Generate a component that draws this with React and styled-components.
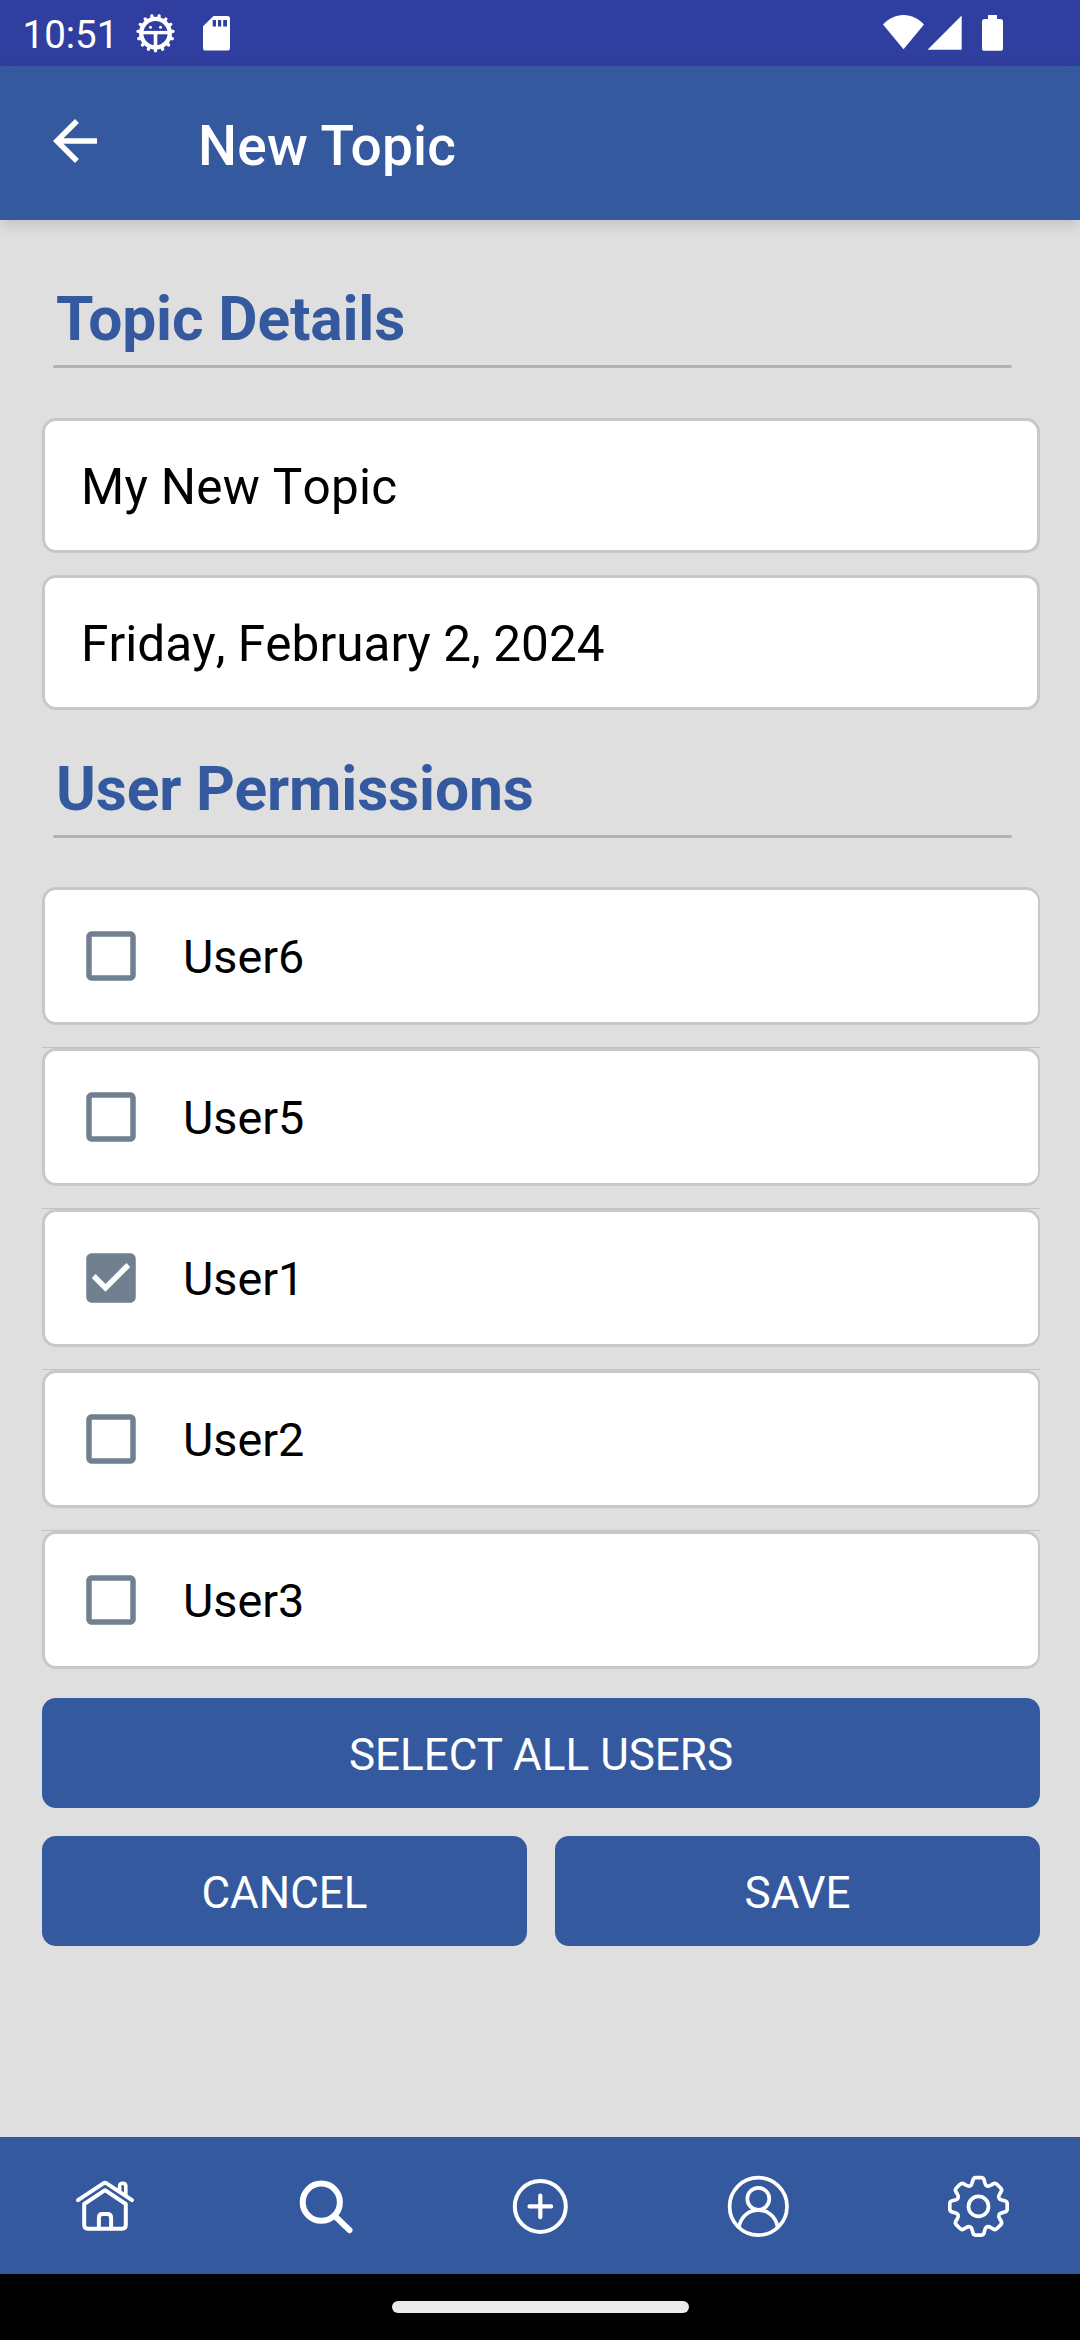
import React, { useState } from 'react';
import styled, { createGlobalStyle } from 'styled-components';

const Global = createGlobalStyle`
  * { box-sizing: border-box; }
  body { margin: 0; background: #dfdfdf; font-family: Roboto, "Noto Sans", sans-serif; }
  button, input { font: inherit; }
`;

const Screen = styled.div`
  width: 1080px;
  height: 2340px;
  display: flex;
  flex-direction: column;
  background: #dfdfdf;
  overflow: hidden;
`;

const StatusBar = styled.div`
  height: 66px;
  flex: none;
  display: flex;
  justify-content: space-between;
  background: #303f9f;
  color: #fff;
`;

const StatusGroup = styled.div`
  display: flex;
  align-items: flex-start;
  padding: 0 ${(p) => p.$right || 0}px 0 ${(p) => p.$left || 0}px;
`;

const Clock = styled.span`
  width: 113px;
  font-size: 38.5px;
  line-height: 69px;
`;

const Glyph = styled.svg`
  display: block;
  flex: none;
  overflow: visible;
`;

const AppBar = styled.header`
  height: 154px;
  flex: none;
  display: flex;
  padding-left: 42px;
  background: #34599f;
  color: #fff;
  box-shadow: 0 5px 14px rgba(0, 0, 0, 0.13);
  z-index: 1;
`;

const BackButton = styled.button`
  width: 66px;
  height: 66px;
  margin-top: 42px;
  padding: 0;
  border: 0;
  background: none;
  color: inherit;
`;

const Title = styled.h1`
  margin: 0 0 0 90px;
  font-size: 55px;
  font-weight: 500;
  letter-spacing: 0.2px;
  line-height: 161px;
`;

const Form = styled.main`
  flex: 1;
  padding: 20px 40px 0 42px;
`;

const Heading = styled.h2`
  width: 959px;
  margin: 0 0 ${(p) => p.$after}px 11px;
  padding: 43.5px 0 0 3px;
  font-size: 60.5px;
  font-weight: 700;
  letter-spacing: -0.15px;
  line-height: 72px;
  color: #34599f;

  &::after {
    content: "";
    display: block;
    height: 3px;
    margin: 9.5px 0 0 -3px;
    border-radius: 2px;
    background: #b2b2b2;
  }
`;

const Fields = styled.div`
  display: grid;
  gap: 22px;
`;

const Field = styled.div`
  height: 135px;
  padding: 3px 0 0 36px;
  border: 3px solid #c8c8c8;
  border-radius: 14px;
  background: #fff;
  color: #000;
  font-size: 49.5px;
  font-kerning: none;
  letter-spacing: ${(p) => p.$tracking}px;
  line-height: 127px;
`;

const UserList = styled.ul`
  margin: 0;
  padding: 0;
  list-style: none;
`;

const UserItem = styled.li`
  & + & {
    margin-top: 22px;
    border-top: 1px solid #c2c2c2;
  }
`;

const UserRow = styled.label`
  height: 138px;
  display: flex;
  align-items: center;
  gap: 39px;
  padding-left: 33px;
  border: 3px solid #c8c8c8;
  border-right-width: 2px;
  border-radius: 14px;
  background: #fff;
  color: #000;
  font-size: 46.75px;
  line-height: 1;
`;

const UserName = styled.span`
  padding-top: 2px;
`;

const Actions = styled.div`
  display: grid;
  grid-template-columns: 1fr 1fr;
  gap: 28px;
  margin-top: 29px;
`;

const Button = styled.button`
  grid-column: ${(p) => (p.$wide ? '1 / -1' : 'auto')};
  height: 110px;
  padding: 4px 0 0;
  border: 0;
  border-radius: 14px;
  background: #34599f;
  color: #fff;
  font-size: 44px;
  text-transform: uppercase;
`;

const TabBar = styled.nav`
  height: 137px;
  flex: none;
  display: flex;
  justify-content: space-between;
  align-items: center;
  padding: 1px 67px 0 69px;
  background: #34599f;
  color: #fff;
`;

const SystemBar = styled.div`
  height: 66px;
  flex: none;
  display: flex;
  justify-content: center;
  align-items: center;
  background: #000;
`;

const Pill = styled.div`
  width: 297px;
  height: 12px;
  border-radius: 6px;
  background: #ebebeb;
`;

function polar(r, deg) {
  const a = (deg * Math.PI) / 180;
  return [r * Math.cos(a), r * Math.sin(a)];
}

function DebugIcon() {
  const teeth = Array.from({ length: 15 }, (_, i) => 90 + i * 24);
  return (
    <Glyph width="40" height="66" viewBox="0 0 40 66" fill="none" stroke="currentColor">
      <g transform="translate(19.5 33.2)">
        <circle r="14.3" strokeWidth="4.4" />
        {teeth.map((d) => {
          const [x1, y1] = polar(15, d);
          const [x2, y2] = polar(17.6, d);
          return <line key={d} x1={x1} y1={y1} x2={x2} y2={y2} strokeWidth="3.3" strokeLinecap="round" />;
        })}
        <path d="M-13-.6H13" strokeWidth="3.4" />
        <path d="M0 0V13" strokeWidth="3.6" />
        <circle cx="-5" cy="-5.9" r="1.5" fill="currentColor" stroke="none" />
        <circle cx="5" cy="-5.9" r="1.5" fill="currentColor" stroke="none" />
      </g>
    </Glyph>
  );
}

function SdIcon() {
  return (
    <Glyph width="28" height="66" viewBox="0 0 28 66" fill="currentColor">
      <path
        fillRule="evenodd"
        d="M10.5 16H24.3Q27 16 27 18.7V48Q27 50.6 24.3 50.6H2.7Q0 50.6 0 48V26.3ZM9.7 20V26.4H13V20ZM15 20V26.4H18.2V20ZM20.2 20V26.4H24V20Z"
      />
    </Glyph>
  );
}

function SignalIcons() {
  return (
    <Glyph width="120" height="66" viewBox="0 0 120 66" fill="currentColor">
      <path d="M0 24.5C5 19 12.5 15 20.5 15S36 19 41 24.5L20.5 49.3Z" />
      <path d="M44.5 49.7H78.7V15.4Z" />
      <path d="M105 15H114V19H117.3Q120 19 120 21.5V48.2Q120 50.8 117.3 50.8H101.7Q99 50.8 99 48.2V21.5Q99 19 101.7 19H105Z" />
    </Glyph>
  );
}

function BackIcon() {
  return (
    <Glyph width="66" height="66" viewBox="0 0 24 24" fill="currentColor">
      <path d="M20 11H7.83l5.59-5.59L12 4l-8 8 8 8 1.41-1.41L7.83 13H20v-2z" />
    </Glyph>
  );
}

function CheckBox({ checked }) {
  return (
    <Glyph width="66" height="66" viewBox="0 0 24 24" fill="#708090">
      {checked ? (
        <path d="M19 3H5c-1.11 0-2 .9-2 2v14c0 1.1.89 2 2 2h14c1.11 0 2-.9 2-2V5c0-1.1-.89-2-2-2zm-9 14l-5-5 1.41-1.41L10 14.17l7.59-7.59L19 8l-9 9z" />
      ) : (
        <path d="M19 5v14H5V5h14m0-2H5c-1.1 0-2 .9-2 2v14c0 1.1.9 2 2 2h14c1.1 0 2-.9 2-2V5c0-1.1-.9-2-2-2z" />
      )}
    </Glyph>
  );
}

const tabProps = {
  width: 72,
  height: 72,
  viewBox: '-36 -36 72 72',
  fill: 'none',
  stroke: 'currentColor',
  strokeLinecap: 'round',
  strokeLinejoin: 'round',
};

function HomeIcon() {
  return (
    <Glyph {...tabProps} strokeWidth="4">
      <g transform="translate(0 .4)">
        <path d="M-27-6.2L-1.6-23Q0-24 1.6-23L27-6.2" />
        <path d="M14.6-16V-20.5Q14.6-23.2 17.7-23.2T20.8-20.5V-11" strokeWidth="3.6" />
        <path d="M-20.8-2.4L0-16.2L20.8-2.4V18.6Q20.8 22.3 17.1 22.3H-17.1Q-20.8 22.3-20.8 18.6Z" />
        <path d="M-6.1 22V11.6Q-6.1 7.7-2.5 7.7H2.5Q6.1 7.7 6.1 11.6V22" />
      </g>
    </Glyph>
  );
}

function SearchIcon() {
  return (
    <Glyph {...tabProps} strokeWidth="6">
      <circle cx="-1.7" cy="-3.8" r="18.6" />
      <path d="M12.5 10.6L26.5 24.2" />
    </Glyph>
  );
}

function AddIcon() {
  return (
    <Glyph {...tabProps} strokeWidth="4">
      <g transform="translate(-.7 .4)">
        <circle r="25.5" />
        <path d="M-10.8 0H10.8M0-10.8V10.8" strokeWidth="4.2" />
      </g>
    </Glyph>
  );
}

function AccountIcon() {
  return (
    <Glyph {...tabProps} strokeWidth="3.7">
      <g transform="translate(-.7 .4)">
        <circle r="28.7" />
        <circle cy="-7.6" r="11" />
        <path d="M-19.3 20.6C-17.5 10-9.5 3.7 0 3.7S17.5 10 19.3 20.6" />
      </g>
    </Glyph>
  );
}

function gearPath() {
  const point = (deg, x, y) => {
    const a = (deg * Math.PI) / 180;
    const px = x * Math.cos(a) - y * Math.sin(a);
    const py = x * Math.sin(a) + y * Math.cos(a);
    return `${px.toFixed(2)} ${py.toFixed(2)}`;
  };
  const parts = [];
  for (let i = 0; i < 8; i += 1) {
    const here = (x, y) => point(i * 45, x, y);
    const next = (x, y) => point((i + 1) * 45, x, y);
    parts.push(`${i ? 'L' : 'M'}${here(-6.2, -24)}`);
    parts.push(`L${here(-5.6, -26.3)}Q${here(-5, -28.7)} ${here(-2.6, -28.7)}`);
    parts.push(`L${here(2.6, -28.7)}Q${here(5, -28.7)} ${here(5.6, -26.3)}`);
    parts.push(`L${here(6.2, -24)}Q${here(6.8, -21.2)} ${here(8.2, -20.6)}`);
    parts.push(`Q${here(8.6, -20.4)} ${next(-8.2, -20.6)}Q${next(-6.8, -21.2)} ${next(-6.2, -24)}`);
  }
  return `${parts.join('')}Z`;
}

function SettingsIcon() {
  return (
    <Glyph {...tabProps} strokeWidth="3.7">
      <g transform="translate(1.5 .4)">
        <path d={gearPath()} />
        <circle r="10" />
      </g>
    </Glyph>
  );
}

const initialUsers = [
  { name: 'User6', checked: false },
  { name: 'User5', checked: false },
  { name: 'User1', checked: true },
  { name: 'User2', checked: false },
  { name: 'User3', checked: false },
];

export default function App() {
  const [users, setUsers] = useState(initialUsers);
  const toggle = (name) =>
    setUsers(users.map((u) => (u.name === name ? { ...u, checked: !u.checked } : u)));
  const selectAll = () => setUsers(users.map((u) => ({ ...u, checked: true })));

  return (
    <>
      <Global />
      <Screen>
        <StatusBar>
          <StatusGroup $left={22.5}>
            <Clock>10:51</Clock>
            <DebugIcon />
            <StatusGroup $left={27.5}>
              <SdIcon />
            </StatusGroup>
          </StatusGroup>
          <StatusGroup $right={77}>
            <SignalIcons />
          </StatusGroup>
        </StatusBar>
        <AppBar>
          <BackButton aria-label="Back">
            <BackIcon />
          </BackButton>
          <Title>New Topic</Title>
        </AppBar>
        <Form>
          <Heading $after={50}>Topic Details</Heading>
          <Fields>
            <Field $tracking={0.25}>My New Topic</Field>
            <Field $tracking={0.05}>Friday, February 2, 2024</Field>
          </Fields>
          <Heading $after={49}>User Permissions</Heading>
          <UserList>
            {users.map((u) => (
              <UserItem key={u.name}>
                <UserRow onClick={() => toggle(u.name)}>
                  <CheckBox checked={u.checked} />
                  <UserName>{u.name}</UserName>
                </UserRow>
              </UserItem>
            ))}
          </UserList>
          <Actions>
            <Button $wide onClick={selectAll}>Select all users</Button>
            <Button>Cancel</Button>
            <Button>Save</Button>
          </Actions>
        </Form>
        <TabBar>
          <HomeIcon />
          <SearchIcon />
          <AddIcon />
          <AccountIcon />
          <SettingsIcon />
        </TabBar>
        <SystemBar>
          <Pill />
        </SystemBar>
      </Screen>
    </>
  );
}
